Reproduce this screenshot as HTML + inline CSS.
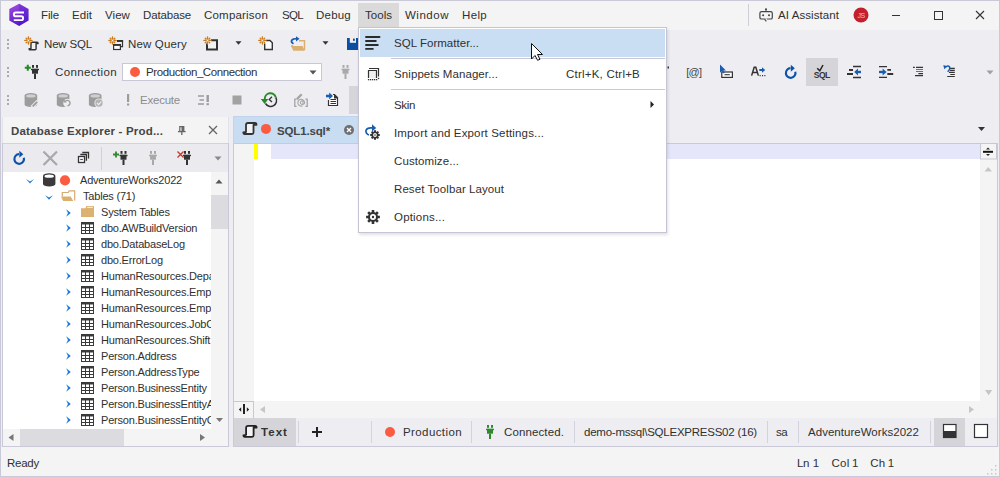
<!DOCTYPE html>
<html><head><meta charset="utf-8"><style>
html,body{margin:0;padding:0;width:1000px;height:477px;overflow:hidden;background:#f3f3f3}
body{position:relative;font-family:"Liberation Sans",sans-serif}
div,span,svg{position:absolute}
.t{white-space:pre;line-height:16px;font-size:12px}
</style></head><body>
<div style="left:0px;top:0px;width:1000px;height:477px;background:#f4f4f4;"></div>
<div style="left:1px;top:30px;width:998px;height:86px;background:#eeeef2;"></div>
<div style="left:1px;top:116px;width:998px;height:331px;background:#eeeef2;"></div>
<div style="left:0px;top:0px;width:1000px;height:1px;background:#c9c9d8;"></div>
<div style="left:0px;top:0px;width:1px;height:477px;background:#c9c9d8;"></div>
<div style="left:999px;top:0px;width:1px;height:477px;background:#c9c9d8;"></div>
<div style="left:0px;top:476px;width:1000px;height:1px;background:#c9c9d8;"></div>
<div style="left:358px;top:3px;width:41px;height:24px;background:#dadada;"></div>
<span class="t" style="letter-spacing:-0.13px;left:41px;top:7.2px;font-size:11.5px;color:#303030;">File</span>
<span class="t" style="letter-spacing:0.04px;left:72px;top:7.2px;font-size:11.5px;color:#303030;">Edit</span>
<span class="t" style="letter-spacing:0.07px;left:105px;top:7.2px;font-size:11.5px;color:#303030;">View</span>
<span class="t" style="letter-spacing:-0.15px;left:143px;top:7.2px;font-size:11.5px;color:#303030;">Database</span>
<span class="t" style="letter-spacing:0.20px;left:204px;top:7.2px;font-size:11.5px;color:#303030;">Comparison</span>
<span class="t" style="letter-spacing:-0.67px;left:282px;top:7.2px;font-size:11.5px;color:#303030;">SQL</span>
<span class="t" style="letter-spacing:0.22px;left:316px;top:7.2px;font-size:11.5px;color:#303030;">Debug</span>
<span class="t" style="letter-spacing:0.03px;left:365px;top:7.2px;font-size:11.5px;color:#303030;">Tools</span>
<span class="t" style="letter-spacing:0.52px;left:405px;top:7.2px;font-size:11.5px;color:#303030;">Window</span>
<span class="t" style="letter-spacing:0.34px;left:462px;top:7.2px;font-size:11.5px;color:#303030;">Help</span>
<div style="left:748px;top:4px;width:1px;height:22px;background:#cfcfda;"></div>
<span class="t" style="letter-spacing:0.08px;left:778px;top:7.2px;font-size:11.5px;color:#303030;">AI Assistant</span>
<span class="t" style="letter-spacing:-0.17px;left:44px;top:36.2px;font-size:11.5px;color:#303030;">New SQL</span>
<span class="t" style="letter-spacing:0.16px;left:128px;top:36.2px;font-size:11.5px;color:#303030;">New Query</span>
<span class="t" style="letter-spacing:0.38px;left:55px;top:64.2px;font-size:11.5px;color:#303030;">Connection</span>
<div style="left:122px;top:63px;width:200px;height:18px;background:#ffffff;border:1px solid #c8c8d6;box-sizing:border-box;"></div>
<span class="t" style="letter-spacing:-0.41px;left:146px;top:64.2px;font-size:11.5px;color:#303030;">Production_Connection</span>
<span class="t" style="letter-spacing:-0.22px;left:140px;top:92.2px;font-size:11.5px;color:#8c8c8c;">Execute</span>
<div style="left:349px;top:86px;width:9px;height:28px;background:#d6d6da;"></div>
<div style="left:806px;top:58px;width:32px;height:28px;background:#d5d5d9;"></div>
<div style="left:2px;top:117px;width:227px;height:330px;background:#c9c9d8;"></div>
<div style="left:3px;top:117px;width:225px;height:26px;background:#f4f4f4;"></div>
<div style="left:2px;top:117px;width:1px;height:26px;background:#e2e2ea;"></div>
<div style="left:228px;top:117px;width:1px;height:26px;background:#e2e2ea;"></div>
<div style="left:3px;top:143px;width:225px;height:1px;background:#d2d2dc;"></div>
<div style="left:3px;top:144px;width:225px;height:28px;background:#ebebef;"></div>
<div style="left:3px;top:172px;width:208px;height:257px;background:#ffffff;"></div>
<div style="left:211px;top:172px;width:17px;height:257px;background:#f4f4f4;"></div>
<div style="left:3px;top:429px;width:225px;height:17px;background:#f4f4f4;"></div>
<span class="t" style="letter-spacing:0.19px;left:11px;top:122.7px;font-size:11.5px;color:#454545;font-weight:bold;">Database Explorer - Prod...</span>
<div style="left:3px;top:172px;width:208px;height:257px;overflow:hidden">
<span class="t" style="left:77px;top:0.36px;font-size:11px;color:#303030;letter-spacing:-0.2px;">AdventureWorks2022</span>
<span class="t" style="left:80px;top:16.36px;font-size:11px;color:#303030;letter-spacing:-0.2px;">Tables (71)</span>
<span class="t" style="left:98px;top:32.36px;font-size:11px;color:#303030;letter-spacing:-0.2px;">System Tables</span>
<span class="t" style="left:98px;top:48.36px;font-size:11px;color:#303030;letter-spacing:-0.2px;">dbo.AWBuildVersion</span>
<span class="t" style="left:98px;top:64.36px;font-size:11px;color:#303030;letter-spacing:-0.2px;">dbo.DatabaseLog</span>
<span class="t" style="left:98px;top:80.36px;font-size:11px;color:#303030;letter-spacing:-0.2px;">dbo.ErrorLog</span>
<span class="t" style="left:98px;top:96.36px;font-size:11px;color:#303030;letter-spacing:-0.2px;">HumanResources.Department</span>
<span class="t" style="left:98px;top:112.36px;font-size:11px;color:#303030;letter-spacing:-0.2px;">HumanResources.Employee</span>
<span class="t" style="left:98px;top:128.36px;font-size:11px;color:#303030;letter-spacing:-0.2px;">HumanResources.EmployeeDepartmentHistory</span>
<span class="t" style="left:98px;top:144.36px;font-size:11px;color:#303030;letter-spacing:-0.2px;">HumanResources.JobCandidate</span>
<span class="t" style="left:98px;top:160.36px;font-size:11px;color:#303030;letter-spacing:-0.2px;">HumanResources.Shift</span>
<span class="t" style="left:98px;top:176.36px;font-size:11px;color:#303030;letter-spacing:-0.2px;">Person.Address</span>
<span class="t" style="left:98px;top:192.36px;font-size:11px;color:#303030;letter-spacing:-0.2px;">Person.AddressType</span>
<span class="t" style="left:98px;top:208.36px;font-size:11px;color:#303030;letter-spacing:-0.2px;">Person.BusinessEntity</span>
<span class="t" style="left:98px;top:224.36px;font-size:11px;color:#303030;letter-spacing:-0.2px;">Person.BusinessEntityAddress</span>
<span class="t" style="left:98px;top:240.36px;font-size:11px;color:#303030;letter-spacing:-0.2px;">Person.BusinessEntityContact</span>
</div>
<div style="left:233px;top:143px;width:765px;height:304px;background:#c9c9d8;"></div>
<div style="left:233px;top:116px;width:125px;height:27px;background:#c0d4ee;"></div>
<div style="left:234px;top:117px;width:124px;height:26px;background:#c8dcf2;"></div>
<span class="t" style="letter-spacing:-0.15px;left:277px;top:122.5px;font-size:11.5px;color:#454545;font-weight:bold;">SQL1.sql*</span>
<div style="left:234px;top:144px;width:763px;height:257px;background:#ffffff;"></div>
<div style="left:234px;top:144px;width:20px;height:257px;background:#f4f4f4;"></div>
<div style="left:254px;top:144px;width:4px;height:15px;background:#ffff00;"></div>
<div style="left:271px;top:144px;width:709px;height:15px;background:#e6e6fa;"></div>
<div style="left:980px;top:144px;width:17px;height:257px;background:#f4f4f4;"></div>
<div style="left:234px;top:401px;width:763px;height:17px;background:#f4f4f4;"></div>
<div style="left:234px;top:418px;width:763px;height:28px;background:#eeeef2;"></div>
<div style="left:234px;top:418px;width:62px;height:28px;background:#d5d5d9;"></div>
<span class="t" style="letter-spacing:1.05px;left:261px;top:424.2px;font-size:11.5px;color:#333333;font-weight:bold;">Text</span>
<div style="left:298px;top:421px;width:1px;height:22px;background:#d3d3dd;"></div>
<div style="left:371px;top:421px;width:1px;height:22px;background:#d3d3dd;"></div>
<div style="left:471px;top:421px;width:1px;height:22px;background:#d3d3dd;"></div>
<div style="left:574px;top:421px;width:1px;height:22px;background:#d3d3dd;"></div>
<div style="left:767px;top:421px;width:1px;height:22px;background:#d3d3dd;"></div>
<div style="left:798px;top:421px;width:1px;height:22px;background:#d3d3dd;"></div>
<div style="left:930px;top:421px;width:1px;height:22px;background:#d3d3dd;"></div>
<div style="left:934px;top:418px;width:31px;height:28px;background:#d5d5d9;"></div>
<span class="t" style="letter-spacing:0.40px;left:403px;top:424.2px;font-size:11.5px;color:#303030;">Production</span>
<span class="t" style="letter-spacing:0.12px;left:504px;top:424.2px;font-size:11.5px;color:#303030;">Connected.</span>
<span class="t" style="letter-spacing:-0.24px;left:584px;top:424.2px;font-size:11.5px;color:#303030;">demo-mssql\SQLEXPRESS02 (16)</span>
<span class="t" style="letter-spacing:-0.58px;left:776px;top:424.2px;font-size:11.5px;color:#303030;">sa</span>
<span class="t" style="letter-spacing:0.03px;left:808px;top:424.2px;font-size:11.5px;color:#303030;">AdventureWorks2022</span>
<span class="t" style="letter-spacing:-0.25px;left:7px;top:455.2px;font-size:11.5px;color:#303030;">Ready</span>
<span class="t" style="letter-spacing:-0.30px;left:797px;top:455.2px;font-size:11.5px;color:#303030;">Ln</span>
<span class="t" style="left:812.8px;top:455.2px;font-size:11.5px;color:#303030;">1</span>
<span class="t" style="letter-spacing:0.24px;left:831.5px;top:455.2px;font-size:11.5px;color:#303030;">Col</span>
<span class="t" style="left:852px;top:455.2px;font-size:11.5px;color:#303030;">1</span>
<span class="t" style="letter-spacing:0.15px;left:870.3px;top:455.2px;font-size:11.5px;color:#303030;">Ch</span>
<span class="t" style="left:887.7px;top:455.2px;font-size:11.5px;color:#303030;">1</span>
<svg style="left:0;top:0" width="1000" height="477" viewBox="0 0 1000 477"><defs><linearGradient id="lg" x1="0" y1="0" x2="0.3" y2="1"><stop offset="0" stop-color="#a34ee0"/><stop offset="1" stop-color="#5b1ad0"/></linearGradient></defs><path d="M19.1 3.8L28.5 9.1V20.6L19.1 26L9.3 20.6V9.1Z" fill="url(#lg)"/><path d="M19.1 3.8L28.5 9.1V20.6L19.1 26Z" fill="#4a1ac8" opacity="0.35"/><path d="M24 12.5H15.8a1.9 1.9 0 0 0 0 3.8h5.4a1.9 1.9 0 0 1 0 3.8H13.8" stroke="#fff" stroke-width="1.9" fill="none"/><rect x="759.9" y="11.6" width="12.4" height="7.4" rx="1.6" fill="none" stroke="#444" stroke-width="1.2"/><path d="M764.6 18.6L766.3 21.3L767.3 18.6Z" fill="#f4f4f4"/><path d="M764.6 19.1L766.3 21.3" stroke="#444" stroke-width="1.1"/><circle cx="766" cy="9.2" r="1.05" fill="#444"/><rect x="765.5" y="9.5" width="1" height="2.2" fill="#444"/><circle cx="763.1" cy="15.3" r="1" fill="#444"/><circle cx="769" cy="15.3" r="1" fill="#444"/><circle cx="861" cy="15" r="7.5" fill="#c41f2d"/><text x="861" y="17.8" font-size="7" fill="#eec0c4" text-anchor="middle" font-family="Liberation Sans" letter-spacing="-0.6">JS</text><path d="M892 15.5H900" stroke="#333" stroke-width="1"/><rect x="934.5" y="11.5" width="8" height="8" fill="none" stroke="#333"/><path d="M976 11L984 19M984 11L976 19" stroke="#333" stroke-width="1.1"/><rect x="7" y="39" width="2" height="2" fill="#a9a9b2"/><rect x="7" y="43" width="2" height="2" fill="#a9a9b2"/><rect x="7" y="47" width="2" height="2" fill="#a9a9b2"/><rect x="7" y="67" width="2" height="2" fill="#a9a9b2"/><rect x="7" y="71" width="2" height="2" fill="#a9a9b2"/><rect x="7" y="75" width="2" height="2" fill="#a9a9b2"/><rect x="7" y="95" width="2" height="2" fill="#a9a9b2"/><rect x="7" y="99" width="2" height="2" fill="#a9a9b2"/><rect x="7" y="103" width="2" height="2" fill="#a9a9b2"/><g transform="translate(28.6 41.6) scale(0.68)"><path d="M3.5 10V3Q3.5 1 5.5 1H12.5Q14 1 14 2.8H11V10.5Q11 12 9.5 12H1.8Q0.8 12 0.8 10.5Z" fill="#f2f2f2" stroke="#333333" stroke-width="2.1" stroke-linejoin="round"/></g><path d="M29.80 40.40L32.00 40.40M29.88 41.88L30.66 42.66M28.40 41.80L28.40 44.00M26.92 41.88L26.14 42.66M27.00 40.40L24.80 40.40M26.92 38.92L26.14 38.14M28.40 39.00L28.40 36.80M29.88 38.92L30.66 38.14" stroke="#c97b1c" stroke-width="1.35" stroke-linecap="round" fill="none"/><path d="M117.6 42V41H122.5V46.6H120.6" fill="none" stroke="#333" stroke-width="1.2"/><rect x="117" y="40" width="6.1" height="1.9" fill="#333"/><rect x="113.6" y="44.6" width="6.8" height="4.9" fill="#fff" stroke="#333" stroke-width="1.2"/><rect x="113" y="44" width="8" height="1.9" fill="#333"/><path d="M113.90 40.50L116.10 40.50M113.98 41.98L114.76 42.76M112.50 41.90L112.50 44.10M111.02 41.98L110.24 42.76M111.10 40.50L108.90 40.50M111.02 39.02L110.24 38.24M112.50 39.10L112.50 36.90M113.98 39.02L114.76 38.24" stroke="#c97b1c" stroke-width="1.35" stroke-linecap="round" fill="none"/><path d="M211 40.2H217V49.6H207V43.5" fill="#f2f2f2" stroke="#333333" stroke-width="2"/><path d="M208.90 40.40L211.10 40.40M208.98 41.88L209.76 42.66M207.50 41.80L207.50 44.00M206.02 41.88L205.24 42.66M206.10 40.40L203.90 40.40M206.02 38.92L205.24 38.14M207.50 39.00L207.50 36.80M208.98 38.92L209.76 38.14" stroke="#c97b1c" stroke-width="1.35" stroke-linecap="round" fill="none"/><path d="M235.5 41.25H241.5L238.5 44.75Z" fill="#333"/><path d="M266 40.5H270L272.3 42.8V49.5H264.7V43.5" fill="#fff" stroke="#333333" stroke-width="1.4"/><path d="M263.80 40.40L266.00 40.40M263.88 41.88L264.66 42.66M262.40 41.80L262.40 44.00M260.92 41.88L260.14 42.66M261.00 40.40L258.80 40.40M260.92 38.92L260.14 38.14M262.40 39.00L262.40 36.80M263.88 38.92L264.66 38.14" stroke="#c97b1c" stroke-width="1.35" stroke-linecap="round" fill="none"/><path d="M299 40.7H304.5V50" stroke="#dbb06f" stroke-width="1.5" fill="none"/><path d="M291 46H302.5L304.8 50.8H293.3Z" fill="#dbb06f"/><rect x="291.3" y="45" width="1.6" height="2" fill="#dbb06f"/><path d="M293.5 43.8Q290.6 42.3 291.8 40.2Q293 38.7 297 38.7" stroke="#1a5cb0" stroke-width="1.8" fill="none"/><path d="M296 36.2L299.6 38.8L296 41.4Z" fill="#1a5cb0"/><path d="M322.5 41.25H328.5L325.5 44.75Z" fill="#333"/><path d="M347 38H358V50H347Z" fill="#0b4fa3"/><rect x="349.8" y="38" width="6.2" height="4.8" fill="#eeeef2"/><rect x="353" y="38.6" width="1.8" height="2.2" fill="#0b4fa3"/><path d="M24.8 67.8H30.8M27.8 64.8V70.8" stroke="#228b22" stroke-width="2"/><rect x="32" y="65" width="2" height="2.8" fill="#333333"/><rect x="36" y="65" width="2" height="2.8" fill="#333333"/><rect x="31" y="68.8" width="8" height="1.4" fill="#333333"/><rect x="32" y="68.8" width="6" height="4.9" fill="#333333"/><rect x="34" y="73.6" width="2" height="5.4" fill="#333333"/><path d="M309.5 70.5H316.5L313 74.5Z" fill="#555"/><circle cx="135" cy="72" r="5" fill="#fb5b41"/><rect x="342.5" y="65" width="2" height="2.8" fill="#a9a9a9"/><rect x="346.5" y="65" width="2" height="2.8" fill="#a9a9a9"/><rect x="341.5" y="68.8" width="8" height="1.4" fill="#a9a9a9"/><rect x="342.5" y="68.8" width="6" height="4.9" fill="#a9a9a9"/><rect x="344.5" y="73.6" width="2" height="5.4" fill="#a9a9a9"/><rect x="667.5" y="66.5" width="1.5" height="2" fill="#333"/><text x="693.8" y="76" font-size="11" fill="#444" text-anchor="middle" font-family="Liberation Sans" letter-spacing="-0.8">[@]</text><rect x="721.8" y="72" width="10.6" height="5.4" fill="#fff" stroke="#333" stroke-width="1.2"/><path d="M724.5 74.7H729.8" stroke="#333" stroke-width="1.1"/><path d="M720 64.6V72.8L721.9 71L723.4 73.4L724.7 72.7L723.4 70.4H725.9Z" fill="#1a5cb0"/><path d="M751.6 75.6L754.2 67.2H755.8L758.4 75.6M752.7 72.6H757.3" stroke="#333" stroke-width="1.5" fill="none"/><path d="M759.3 70H763" stroke="#1a5cb0" stroke-width="2"/><path d="M762 67.3L765.2 70L762 72.7Z" fill="#1a5cb0"/><path d="M759.6 75.6h1.1M762 75.6h1.1M764.3 75.6h1.1" stroke="#333" stroke-width="1.1"/><path d="M795.3 71.7A4.8 4.8 0 1 1 790.5 68.2" stroke="#0d52a8" stroke-width="2.2" fill="none"/><path d="M790.8 64.7L794.8 68.2L790.8 71.7Z" fill="#0d52a8"/><path d="M817.2 68.3L819.8 70.8L823 65" stroke="#222" stroke-width="1.5" fill="none"/><text x="821.8" y="77.7" font-size="8.5" font-weight="bold" fill="#333" text-anchor="middle" font-family="Liberation Sans" letter-spacing="-0.5">SQL</text><path d="M853 66.5H861M853 77.5H861" stroke="#333" stroke-width="1.3"/><path d="M849 70H853M847 74H853" stroke="#333" stroke-width="1.8"/><path d="M856.5 72H861" stroke="#1a5cb0" stroke-width="2.4"/><path d="M858 68.4L854.2 72L858 75.6Z" fill="#1a5cb0"/><path d="M879 66.6H887M879 77.4H887" stroke="#333" stroke-width="1.3"/><path d="M887.3 69.8H891M887.3 74H893.2" stroke="#333" stroke-width="1.8"/><path d="M879 72H883.5" stroke="#1a5cb0" stroke-width="2.4"/><path d="M882.6 68.4L886.6 72L882.6 75.6Z" fill="#1a5cb0"/><path d="M913 67.4H914.8M916 67.4H923M918.4 73.6H923M915 75.6H923" stroke="#333" stroke-width="1.1"/><path d="M916 69.5H923M916 71.5H923" stroke="#2f9a3a" stroke-width="1.1"/><path d="M949.9 68.4H954.8M949.9 70.4H954.8M949 72.4H954.8M950.3 74.5H954.8M947.2 76.5H954.8" stroke="#333" stroke-width="1.1"/><path d="M945.5 67.2Q947.8 64.8 949.5 66.8Q950.6 68.8 947.6 71.8" stroke="#1a5cb0" stroke-width="1.5" fill="none"/><path d="M943.3 65L947.2 66.2L944.3 69.2Z" fill="#1a5cb0"/><path d="M986.5 70.5H993.5L990 74.5Z" fill="#a0a0a0"/><path d="M978.0 127.0H985.0L981.5 131.0Z" fill="#333"/><path d="M24.6 95.6A6.3 2.6 0 0 1 37.2 95.6V104.4A6.3 2.6 0 0 1 24.6 104.4Z" fill="#9c9c9c"/><ellipse cx="30.900000000000002" cy="95.89999999999999" rx="4.8" ry="1.6" fill="#cfcfcf"/><path d="M56.8 95.6A6.3 2.6 0 0 1 69.39999999999999 95.6V104.4A6.3 2.6 0 0 1 56.8 104.4Z" fill="#9c9c9c"/><ellipse cx="63.099999999999994" cy="95.89999999999999" rx="4.8" ry="1.6" fill="#cfcfcf"/><path d="M88.9 95.6A6.3 2.6 0 0 1 101.5 95.6V104.4A6.3 2.6 0 0 1 88.9 104.4Z" fill="#9c9c9c"/><ellipse cx="95.2" cy="95.89999999999999" rx="4.8" ry="1.6" fill="#cfcfcf"/><path d="M30.5 106L36.5 100L39 102.5L33 108.5Z" fill="#eeeef2"/><path d="M32 105.8L36.5 101.3L37.8 102.6L33.3 107.1Z" fill="#9c9c9c"/><circle cx="67.5" cy="103" r="4.3" fill="#eeeef2"/><path d="M65.2 101.5A2.7 2.7 0 1 1 67.5 105.8" stroke="#9c9c9c" stroke-width="1.4" fill="none"/><path d="M63.6 99.6L66.8 102.4H63.6Z" fill="#9c9c9c"/><circle cx="99" cy="103" r="4.6" fill="#eeeef2"/><circle cx="99" cy="103" r="3.7" fill="#b4b4b4"/><path d="M97 103L98.6 104.6L101.3 101.6" stroke="#eeeef2" stroke-width="1.1" fill="none"/><rect x="127" y="94" width="2.2" height="8" fill="#9c9c9c"/><rect x="127" y="103.5" width="2.2" height="2" fill="#9c9c9c"/><path d="M198 96H204M199.5 100H204M198 104H204" stroke="#9c9c9c" stroke-width="1.5"/><rect x="206.5" y="95" width="2.4" height="7" fill="#9c9c9c"/><rect x="206.5" y="103.2" width="2.4" height="2" fill="#9c9c9c"/><rect x="232.5" y="95.5" width="9" height="9" fill="#a2a2a2"/><path d="M275.8 97.5A5.6 5.6 0 1 1 265.5 103.5" stroke="#333" stroke-width="1.5" fill="none"/><path d="M272 96.8L269.2 99.4L272 102" stroke="#333" stroke-width="1.3" fill="none"/><path d="M264.8 99.5A5.6 5.6 0 0 1 275.8 97.5" stroke="#2a8a2a" stroke-width="2" fill="none"/><path d="M260.8 99H268.4L264.6 104Z" fill="#2a8a2a"/><path d="M296.6 99.2H294.8V106.3H296.6M305.4 99.2H307.2V106.3H305.4" stroke="#a4a4a4" stroke-width="1.3" fill="none"/><path d="M303 103.6V101.2A1.7 1.7 0 1 0 303 104Q304.6 104.6 304.6 102.6A3.4 3.4 0 1 0 302.6 105.8" stroke="#a4a4a4" stroke-width="1.05" fill="none"/><path d="M296.9 99.1L301.7 94.3" stroke="#a4a4a4" stroke-width="2.2"/><path d="M328.5 100V105.5H337.5V97.5L334.5 94.5H333" fill="#fff" stroke="#333" stroke-width="1.2"/><path d="M334 94.3L337.7 98V98.6H334Z" fill="#333"/><path d="M330.5 99.5H336M330.5 101.5H336M330.5 103.5H336" stroke="#333" stroke-width="1.1"/><path d="M326 96H330" stroke="#1a5cb0" stroke-width="2.6"/><path d="M329.2 92.6L333 96L329.2 99.4Z" fill="#1a5cb0"/><path d="M179.8 131V126.6H183.8V131" fill="none" stroke="#666" stroke-width="1.2"/><rect x="181.5" y="126.6" width="2.3" height="4.4" fill="#666"/><path d="M178 131.6H185.6" stroke="#666" stroke-width="1.3"/><path d="M181.8 132V135" stroke="#666" stroke-width="1.3"/><path d="M209 126L217 134M217 126L209 134" stroke="#666" stroke-width="1.3"/><path d="M23.8 157.7A4.8 4.8 0 1 1 19.0 154.2" stroke="#0d52a8" stroke-width="2.2" fill="none"/><path d="M19.3 150.7L23.3 154.2L19.3 157.7Z" fill="#0d52a8"/><path d="M43.5 151.5L57 165M57 151.5L43.5 165" stroke="#a8a8a8" stroke-width="2.2"/><path d="M82.3 152.5H88.5V158.6" stroke="#333" stroke-width="1.3" fill="none"/><path d="M80.3 154.5H86.4V160.8" stroke="#333" stroke-width="1.3" fill="none"/><rect x="78.5" y="156.5" width="6" height="6" fill="#fff" stroke="#333" stroke-width="1.3"/><path d="M80.2 159.5H82.9" stroke="#1a5cb0" stroke-width="1.2"/><rect x="101" y="147" width="1" height="23" fill="#d0d0da"/><path d="M113 154.5H119M116 151.5V157.5" stroke="#2e8b2e" stroke-width="1.8"/><rect x="120.5" y="151" width="2" height="2.8" fill="#333333"/><rect x="124.5" y="151" width="2" height="2.8" fill="#333333"/><rect x="119.5" y="154.8" width="8" height="1.4" fill="#333333"/><rect x="120.5" y="154.8" width="6" height="4.9" fill="#333333"/><rect x="122.5" y="159.6" width="2" height="5.4" fill="#333333"/><rect x="150" y="151" width="2" height="2.8" fill="#a9a9a9"/><rect x="154" y="151" width="2" height="2.8" fill="#a9a9a9"/><rect x="149" y="154.8" width="8" height="1.4" fill="#a9a9a9"/><rect x="150" y="154.8" width="6" height="4.9" fill="#a9a9a9"/><rect x="152" y="159.6" width="2" height="5.4" fill="#a9a9a9"/><path d="M177.5 151.5L183.5 157.5M183.5 151.5L177.5 157.5" stroke="#c0392b" stroke-width="1.3"/><rect x="184" y="151" width="2" height="2.8" fill="#333333"/><rect x="188" y="151" width="2" height="2.8" fill="#333333"/><rect x="183" y="154.8" width="8" height="1.4" fill="#333333"/><rect x="184" y="154.8" width="6" height="4.9" fill="#333333"/><rect x="186" y="159.6" width="2" height="5.4" fill="#333333"/><path d="M214.5 156.5H221.5L218 160.5Z" fill="#8a8a8a"/><path d="M26 179.10000000000002L30 183.60000000000002L34 179.10000000000002L30 181.4Z" fill="#1a78d6"/><path d="M43 175.9A6.2 2.6 0 0 1 55.4 175.9V184.00000000000003A6.2 2.6 0 0 1 43 184.00000000000003Z" fill="#3a3a3a"/><ellipse cx="49.2" cy="176.20000000000002" rx="4.7" ry="1.6" fill="#ffffff"/><circle cx="65" cy="180.4" r="5.1" fill="#fb5b41"/><path d="M45 195.3L49 199.8L53 195.3L49 197.6Z" fill="#1a78d6"/><path d="M62.3 196.5V192.5H68.2L69.2 190.8H74.7V200.6" fill="none" stroke="#d6ab70" stroke-width="1.2"/><path d="M61 196.4H70.6L73.3 200.9H63.2Z" fill="#dbb06f"/><path d="M66.10000000000001 209.3L70.80000000000001 213.0L66.10000000000001 216.7L68.0 213.0Z" fill="#1a78d6"/><path d="M81 208.3H85.5L86.3 206H94V217H81Z" fill="#dbb26f"/><path d="M87.2 207.3H92.8" stroke="#fff" stroke-width="0.9"/><path d="M66.10000000000001 224.3L70.80000000000001 228.0L66.10000000000001 231.7L68.0 228.0Z" fill="#1a78d6"/><rect x="81.5" y="222.5" width="12" height="11" fill="#fff" stroke="#3a3a3a"/><rect x="81" y="222" width="13" height="2.5" fill="#3a3a3a"/><rect x="81" y="227" width="13" height="1" fill="#3a3a3a"/><rect x="81" y="230" width="13" height="1" fill="#3a3a3a"/><rect x="85" y="222" width="1" height="12" fill="#3a3a3a"/><rect x="89" y="222" width="1" height="12" fill="#3a3a3a"/><path d="M66.10000000000001 240.3L70.80000000000001 244.0L66.10000000000001 247.7L68.0 244.0Z" fill="#1a78d6"/><rect x="81.5" y="238.5" width="12" height="11" fill="#fff" stroke="#3a3a3a"/><rect x="81" y="238" width="13" height="2.5" fill="#3a3a3a"/><rect x="81" y="243" width="13" height="1" fill="#3a3a3a"/><rect x="81" y="246" width="13" height="1" fill="#3a3a3a"/><rect x="85" y="238" width="1" height="12" fill="#3a3a3a"/><rect x="89" y="238" width="1" height="12" fill="#3a3a3a"/><path d="M66.10000000000001 256.3L70.80000000000001 260.0L66.10000000000001 263.7L68.0 260.0Z" fill="#1a78d6"/><rect x="81.5" y="254.5" width="12" height="11" fill="#fff" stroke="#3a3a3a"/><rect x="81" y="254" width="13" height="2.5" fill="#3a3a3a"/><rect x="81" y="259" width="13" height="1" fill="#3a3a3a"/><rect x="81" y="262" width="13" height="1" fill="#3a3a3a"/><rect x="85" y="254" width="1" height="12" fill="#3a3a3a"/><rect x="89" y="254" width="1" height="12" fill="#3a3a3a"/><path d="M66.10000000000001 272.3L70.80000000000001 276.0L66.10000000000001 279.7L68.0 276.0Z" fill="#1a78d6"/><rect x="81.5" y="270.5" width="12" height="11" fill="#fff" stroke="#3a3a3a"/><rect x="81" y="270" width="13" height="2.5" fill="#3a3a3a"/><rect x="81" y="275" width="13" height="1" fill="#3a3a3a"/><rect x="81" y="278" width="13" height="1" fill="#3a3a3a"/><rect x="85" y="270" width="1" height="12" fill="#3a3a3a"/><rect x="89" y="270" width="1" height="12" fill="#3a3a3a"/><path d="M66.10000000000001 288.3L70.80000000000001 292.0L66.10000000000001 295.7L68.0 292.0Z" fill="#1a78d6"/><rect x="81.5" y="286.5" width="12" height="11" fill="#fff" stroke="#3a3a3a"/><rect x="81" y="286" width="13" height="2.5" fill="#3a3a3a"/><rect x="81" y="291" width="13" height="1" fill="#3a3a3a"/><rect x="81" y="294" width="13" height="1" fill="#3a3a3a"/><rect x="85" y="286" width="1" height="12" fill="#3a3a3a"/><rect x="89" y="286" width="1" height="12" fill="#3a3a3a"/><path d="M66.10000000000001 304.3L70.80000000000001 308.0L66.10000000000001 311.7L68.0 308.0Z" fill="#1a78d6"/><rect x="81.5" y="302.5" width="12" height="11" fill="#fff" stroke="#3a3a3a"/><rect x="81" y="302" width="13" height="2.5" fill="#3a3a3a"/><rect x="81" y="307" width="13" height="1" fill="#3a3a3a"/><rect x="81" y="310" width="13" height="1" fill="#3a3a3a"/><rect x="85" y="302" width="1" height="12" fill="#3a3a3a"/><rect x="89" y="302" width="1" height="12" fill="#3a3a3a"/><path d="M66.10000000000001 320.3L70.80000000000001 324.0L66.10000000000001 327.7L68.0 324.0Z" fill="#1a78d6"/><rect x="81.5" y="318.5" width="12" height="11" fill="#fff" stroke="#3a3a3a"/><rect x="81" y="318" width="13" height="2.5" fill="#3a3a3a"/><rect x="81" y="323" width="13" height="1" fill="#3a3a3a"/><rect x="81" y="326" width="13" height="1" fill="#3a3a3a"/><rect x="85" y="318" width="1" height="12" fill="#3a3a3a"/><rect x="89" y="318" width="1" height="12" fill="#3a3a3a"/><path d="M66.10000000000001 336.3L70.80000000000001 340.0L66.10000000000001 343.7L68.0 340.0Z" fill="#1a78d6"/><rect x="81.5" y="334.5" width="12" height="11" fill="#fff" stroke="#3a3a3a"/><rect x="81" y="334" width="13" height="2.5" fill="#3a3a3a"/><rect x="81" y="339" width="13" height="1" fill="#3a3a3a"/><rect x="81" y="342" width="13" height="1" fill="#3a3a3a"/><rect x="85" y="334" width="1" height="12" fill="#3a3a3a"/><rect x="89" y="334" width="1" height="12" fill="#3a3a3a"/><path d="M66.10000000000001 352.3L70.80000000000001 356.0L66.10000000000001 359.7L68.0 356.0Z" fill="#1a78d6"/><rect x="81.5" y="350.5" width="12" height="11" fill="#fff" stroke="#3a3a3a"/><rect x="81" y="350" width="13" height="2.5" fill="#3a3a3a"/><rect x="81" y="355" width="13" height="1" fill="#3a3a3a"/><rect x="81" y="358" width="13" height="1" fill="#3a3a3a"/><rect x="85" y="350" width="1" height="12" fill="#3a3a3a"/><rect x="89" y="350" width="1" height="12" fill="#3a3a3a"/><path d="M66.10000000000001 368.3L70.80000000000001 372.0L66.10000000000001 375.7L68.0 372.0Z" fill="#1a78d6"/><rect x="81.5" y="366.5" width="12" height="11" fill="#fff" stroke="#3a3a3a"/><rect x="81" y="366" width="13" height="2.5" fill="#3a3a3a"/><rect x="81" y="371" width="13" height="1" fill="#3a3a3a"/><rect x="81" y="374" width="13" height="1" fill="#3a3a3a"/><rect x="85" y="366" width="1" height="12" fill="#3a3a3a"/><rect x="89" y="366" width="1" height="12" fill="#3a3a3a"/><path d="M66.10000000000001 384.3L70.80000000000001 388.0L66.10000000000001 391.7L68.0 388.0Z" fill="#1a78d6"/><rect x="81.5" y="382.5" width="12" height="11" fill="#fff" stroke="#3a3a3a"/><rect x="81" y="382" width="13" height="2.5" fill="#3a3a3a"/><rect x="81" y="387" width="13" height="1" fill="#3a3a3a"/><rect x="81" y="390" width="13" height="1" fill="#3a3a3a"/><rect x="85" y="382" width="1" height="12" fill="#3a3a3a"/><rect x="89" y="382" width="1" height="12" fill="#3a3a3a"/><path d="M66.10000000000001 400.3L70.80000000000001 404.0L66.10000000000001 407.7L68.0 404.0Z" fill="#1a78d6"/><rect x="81.5" y="398.5" width="12" height="11" fill="#fff" stroke="#3a3a3a"/><rect x="81" y="398" width="13" height="2.5" fill="#3a3a3a"/><rect x="81" y="403" width="13" height="1" fill="#3a3a3a"/><rect x="81" y="406" width="13" height="1" fill="#3a3a3a"/><rect x="85" y="398" width="1" height="12" fill="#3a3a3a"/><rect x="89" y="398" width="1" height="12" fill="#3a3a3a"/><path d="M66.10000000000001 416.3L70.80000000000001 420.0L66.10000000000001 423.7L68.0 420.0Z" fill="#1a78d6"/><rect x="81.5" y="414.5" width="12" height="11" fill="#fff" stroke="#3a3a3a"/><rect x="81" y="414" width="13" height="2.5" fill="#3a3a3a"/><rect x="81" y="419" width="13" height="1" fill="#3a3a3a"/><rect x="81" y="422" width="13" height="1" fill="#3a3a3a"/><rect x="85" y="414" width="1" height="12" fill="#3a3a3a"/><rect x="89" y="414" width="1" height="12" fill="#3a3a3a"/><path d="M215.5 183.5H222.5L219 179.5Z" fill="#555"/><rect x="211" y="195" width="17" height="34" fill="#dcdce0"/><path d="M216.0 418.0H223.0L219.5 422.0Z" fill="#777"/><rect x="20" y="429" width="104" height="17" fill="#dcdce0"/><path d="M13.5 434L8.5 437.5L13.5 441Z" fill="#777"/><path d="M200 434L205 437.5L200 441Z" fill="#777"/><g transform="translate(242.5 122) scale(1.0)"><path d="M3.5 10V3Q3.5 1 5.5 1H12.5Q14 1 14 2.8H11V10.5Q11 12 9.5 12H1.8Q0.8 12 0.8 10.5Z" fill="#f4f4f4" stroke="#333333" stroke-width="1.8" stroke-linejoin="round"/></g><circle cx="266" cy="128.9" r="5" fill="#fb5b41"/><circle cx="349" cy="130" r="5" fill="#6f6f6f"/><path d="M347 128L351 132M351 128L347 132" stroke="#fff" stroke-width="1.3"/><rect x="980.5" y="143.5" width="16" height="15.5" fill="#f4f4f4" stroke="#c8c8d5"/><path d="M983 151.8H993" stroke="#111" stroke-width="2"/><path d="M986 149.5H990L988 147.5Z" fill="#222"/><path d="M986 154H990L988 156Z" fill="#222"/><path d="M984.5 171.5H992L988.2 167Z" fill="#c6c6c6"/><rect x="234" y="401" width="20" height="1" fill="#c8c8d5"/><rect x="253" y="401" width="1" height="17" fill="#c8c8d5"/><rect x="243" y="404" width="2" height="10" fill="#222"/><path d="M241.2 407.3L238.8 409.5L241.2 411.7Z" fill="#222"/><path d="M246.8 407.3L249.2 409.5L246.8 411.7Z" fill="#222"/><path d="M265 406L260 409.5L265 413Z" fill="#c6c6c6"/><path d="M969 406L974 409.5L969 413Z" fill="#c6c6c6"/><path d="M985 390H992.3L988.6 395.3Z" fill="#c6c6c6"/><g transform="translate(242.6 424.8) scale(1.0)"><path d="M3.5 10V3Q3.5 1 5.5 1H12.5Q14 1 14 2.8H11V10.5Q11 12 9.5 12H1.8Q0.8 12 0.8 10.5Z" fill="#f4f4f4" stroke="#222" stroke-width="1.8" stroke-linejoin="round"/></g><path d="M312 432H322M317 427V437" stroke="#222" stroke-width="2"/><circle cx="390" cy="432" r="5" fill="#fb5b41"/><rect x="487" y="425" width="2" height="2.8" fill="#2f8a2f"/><rect x="491" y="425" width="2" height="2.8" fill="#2f8a2f"/><rect x="486" y="428.8" width="8" height="1.4" fill="#2f8a2f"/><rect x="487" y="428.8" width="6" height="4.9" fill="#2f8a2f"/><rect x="489" y="433.6" width="2" height="5.4" fill="#2f8a2f"/><rect x="943.5" y="424.5" width="12.5" height="13" fill="#fff" stroke="#333" stroke-width="1.2"/><rect x="943.5" y="431" width="12.5" height="6.5" fill="#333"/><rect x="974.5" y="424.5" width="13" height="13" fill="#fff" stroke="#333" stroke-width="1.2"/><rect x="995" y="465" width="1.5" height="1.5" fill="#c6c6d0"/><rect x="991" y="469" width="1.5" height="1.5" fill="#c6c6d0"/><rect x="995" y="469" width="1.5" height="1.5" fill="#c6c6d0"/><rect x="987" y="473" width="1.5" height="1.5" fill="#c6c6d0"/><rect x="991" y="473" width="1.5" height="1.5" fill="#c6c6d0"/><rect x="995" y="473" width="1.5" height="1.5" fill="#c6c6d0"/></svg>
<div style="left:358px;top:27px;width:309px;height:206px;background:#ffffff;border:1px solid #c4c4d4;box-sizing:border-box;box-shadow:1px 2px 3px rgba(0,0,0,0.12);"></div>
<div style="left:360px;top:29px;width:305px;height:28px;background:#c9ddf3;"></div>
<div style="left:391px;top:58px;width:274px;height:1px;background:#c8c8d8;"></div>
<div style="left:391px;top:89px;width:274px;height:1px;background:#c8c8d8;"></div>
<span class="t" style="letter-spacing:0.03px;left:394px;top:35.2px;font-size:11.5px;color:#303030;">SQL Formatter...</span>
<span class="t" style="letter-spacing:0.09px;left:394px;top:66.2px;font-size:11.5px;color:#303030;">Snippets Manager...</span>
<span class="t" style="letter-spacing:0.22px;left:566px;top:66.2px;font-size:11.5px;color:#303030;">Ctrl+K, Ctrl+B</span>
<span class="t" style="letter-spacing:-0.34px;left:394px;top:97.2px;font-size:11.5px;color:#303030;">Skin</span>
<span class="t" style="letter-spacing:0.15px;left:394px;top:125.2px;font-size:11.5px;color:#303030;">Import and Export Settings...</span>
<span class="t" style="letter-spacing:0.09px;left:394px;top:153.2px;font-size:11.5px;color:#303030;">Customize...</span>
<span class="t" style="letter-spacing:0.08px;left:394px;top:181.2px;font-size:11.5px;color:#303030;">Reset Toolbar Layout</span>
<span class="t" style="letter-spacing:0.18px;left:394px;top:209.2px;font-size:11.5px;color:#303030;">Options...</span>
<svg style="left:0;top:0" width="1000" height="477" viewBox="0 0 1000 477"><path d="M366 37H379.5M366 41H375.8M366 45H377.8M366 48.9H372.8" stroke="#2a2a2a" stroke-width="1.9" stroke-linecap="round"/><path d="M369 68.5H378.5V76.5" stroke="#333" stroke-width="1.2" fill="none"/><path d="M368.5 78V70.5H376.5V78" fill="#f0f0f0" stroke="#333" stroke-width="1.2"/><rect x="367.9" y="79" width="1.3" height="1.3" fill="#333"/><rect x="369.9" y="79" width="1.3" height="1.3" fill="#333"/><rect x="371.9" y="79" width="1.3" height="1.3" fill="#333"/><rect x="373.9" y="79" width="1.3" height="1.3" fill="#333"/><rect x="375.9" y="79" width="1.3" height="1.3" fill="#333"/><rect x="377.9" y="77.8" width="1.3" height="1.3" fill="#333"/><path d="M650.5 101V108L654 104.5Z" fill="#222"/><path d="M369 135Q365.5 133.5 366 130.5Q366.8 127.8 371 127.8H373.5" stroke="#1a5cb0" stroke-width="1.7" fill="none"/><path d="M372 124.3L376.2 127.9L372 131.4Z" fill="#1a5cb0"/><path d="M377.60 135.00L379.80 135.00M376.84 136.84L378.39 138.39M375.00 137.60L375.00 139.80M373.16 136.84L371.61 138.39M372.40 135.00L370.20 135.00M373.16 133.16L371.61 131.61M375.00 132.40L375.00 130.20M376.84 133.16L378.39 131.61" stroke="#333" stroke-width="2.0"/><circle cx="375" cy="135" r="3.6" fill="#333"/><circle cx="375" cy="135" r="1.9" fill="#fff"/><circle cx="375" cy="135" r="0.8" fill="#333"/><path d="M377.10 217.00L379.90 217.00M375.90 219.90L377.88 221.88M373.00 221.10L373.00 223.90M370.10 219.90L368.12 221.88M368.90 217.00L366.10 217.00M370.10 214.10L368.12 212.12M373.00 212.90L373.00 210.10M375.90 214.10L377.88 212.12" stroke="#333" stroke-width="2.6"/><circle cx="373" cy="217" r="5.1" fill="#333"/><circle cx="373" cy="217" r="3.0" fill="#fff"/><circle cx="373" cy="217" r="1.2" fill="#333"/><path d="M531.5 43.5V59L535 55.5L537.6 60.3L540 59.3L537.5 54.5H542.5Z" fill="#fff" stroke="#111" stroke-width="1" stroke-linejoin="round"/></svg>
</body></html>
